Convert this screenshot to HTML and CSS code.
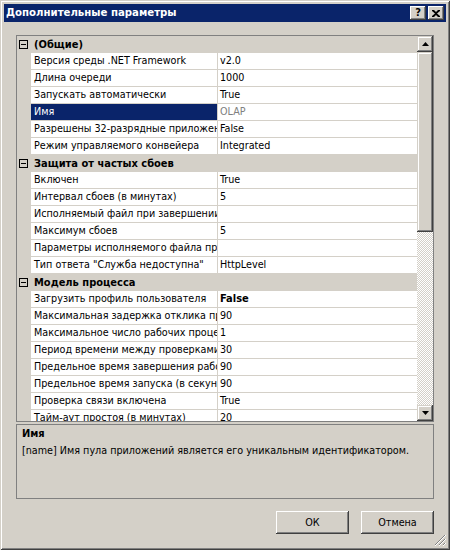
FILE: index.html
```html
<!DOCTYPE html>
<html lang="ru">
<head>
<meta charset="utf-8">
<title>Дополнительные параметры</title>
<link rel="stylesheet" href="styles.css">
</head>
<body>
<div class="window">
  <div class="titlebar">
    <span class="title">Дополнительные параметры</span>
    <div class="tbtns">
      <div class="tbtn help">?</div>
      <div class="tbtn close"><svg width="8" height="7" viewBox="0 0 8 7"><path d="M0 0h2l2 2 2-2h2v1L5 3.5 8 6v1H6L4 5 2 7H0V6l3-2.5L0 1z" fill="#000"/></svg></div>
    </div>
  </div>
  <div class="content">
    <div class="grid">
      <div class="rows">
        <div class="cat"><span class="box"></span><span class="ctext">(Общие)</span></div>
        <div class="row"><span class="mg"></span><span class="lbl">Версия среды .NET Framework</span><span class="val">v2.0</span></div>
        <div class="row"><span class="mg"></span><span class="lbl">Длина очереди</span><span class="val">1000</span></div>
        <div class="row"><span class="mg"></span><span class="lbl">Запускать автоматически</span><span class="val">True</span></div>
        <div class="row sel"><span class="mg"></span><span class="lbl">Имя</span><span class="val ro">OLAP</span></div>
        <div class="row"><span class="mg"></span><span class="lbl">Разрешены 32-разрядные приложения</span><span class="val">False</span></div>
        <div class="row"><span class="mg"></span><span class="lbl">Режим управляемого конвейера</span><span class="val">Integrated</span></div>
        <div class="cat"><span class="box"></span><span class="ctext">Защита от частых сбоев</span></div>
        <div class="row"><span class="mg"></span><span class="lbl">Включен</span><span class="val">True</span></div>
        <div class="row"><span class="mg"></span><span class="lbl">Интервал сбоев (в минутах)</span><span class="val">5</span></div>
        <div class="row"><span class="mg"></span><span class="lbl">Исполняемый файл при завершении работы</span><span class="val"></span></div>
        <div class="row"><span class="mg"></span><span class="lbl">Максимум сбоев</span><span class="val">5</span></div>
        <div class="row"><span class="mg"></span><span class="lbl">Параметры исполняемого файла при завершении</span><span class="val"></span></div>
        <div class="row"><span class="mg"></span><span class="lbl">Тип ответа "Служба недоступна"</span><span class="val">HttpLevel</span></div>
        <div class="cat"><span class="box"></span><span class="ctext">Модель процесса</span></div>
        <div class="row"><span class="mg"></span><span class="lbl">Загрузить профиль пользователя</span><span class="val bold">False</span></div>
        <div class="row"><span class="mg"></span><span class="lbl">Максимальная задержка отклика при проверке связи</span><span class="val">90</span></div>
        <div class="row"><span class="mg"></span><span class="lbl">Максимальное число рабочих процессов</span><span class="val">1</span></div>
        <div class="row"><span class="mg"></span><span class="lbl">Период времени между проверками связи</span><span class="val">30</span></div>
        <div class="row"><span class="mg"></span><span class="lbl">Предельное время завершения работы</span><span class="val">90</span></div>
        <div class="row"><span class="mg"></span><span class="lbl">Предельное время запуска (в секундах)</span><span class="val">90</span></div>
        <div class="row"><span class="mg"></span><span class="lbl">Проверка связи включена</span><span class="val">True</span></div>
        <div class="row"><span class="mg"></span><span class="lbl">Тайм-аут простоя (в минутах)</span><span class="val">20</span></div>
      </div>
      <div class="scrollbar">
        <div class="sbtn"><svg width="7" height="4" viewBox="0 0 7 4"><path d="M3.5 0L7 4H0z" fill="#000"/></svg></div>
        <div class="thumb"></div>
        <div class="track"></div>
        <div class="sbtn"><svg width="7" height="4" viewBox="0 0 7 4"><path d="M0 0h7L3.5 4z" fill="#000"/></svg></div>
      </div>
    </div>
    <div class="desc">
      <div class="dtitle">Имя</div>
      <div class="dtext">[name] Имя пула приложений является его уникальным идентификатором.</div>
    </div>
    <div class="buttons">
      <div class="btn">ОК</div>
      <div class="btn">Отмена</div>
    </div>
  </div>
  <svg class="grip" width="12" height="12" viewBox="0 0 12 12">
    <path d="M11 1L1 11M11 5L5 11M11 9L9 11" stroke="#808080" stroke-width="1"/>
    <path d="M12 1L1 12M12 5L5 12M12 9L9 12" stroke="#fff" stroke-width="1"/>
  </svg>
</div>
</body>
</html>
```
FILE: styles.css
```css
* { box-sizing: border-box; }
html, body { margin: 0; padding: 0; }
body {
  width: 450px;
  height: 550px;
  overflow: hidden;
  font-family: "DejaVu Sans Condensed", "DejaVu Sans", sans-serif;
  font-size: 10.7px;
  color: #000;
  background: #D4D0C8;
}
.window {
  position: relative;
  width: 450px;
  height: 550px;
  background: #D4D0C8;
  padding: 4px;
  box-shadow: inset 1px 1px 0 #D4D0C8, inset -1px -1px 0 #404040, inset 2px 2px 0 #fff, inset -2px -2px 0 #808080;
  display: flex;
  flex-direction: column;
}
.titlebar {
  height: 18px;
  background: #0A246A;
  color: #fff;
  display: flex;
  align-items: center;
  justify-content: space-between;
  padding: 0 2px 0 2px;
}
.title {
  font-weight: bold;
  font-size: 11.3px;
  line-height: 18px;
}
.tbtns { display: flex; gap: 2px; }
.tbtn {
  width: 16px;
  height: 14px;
  background: #D4D0C8;
  color: #000;
  box-shadow: inset -1px -1px 0 #404040, inset 1px 1px 0 #fff, inset -2px -2px 0 #808080;
  display: flex;
  align-items: center;
  justify-content: center;
  font-weight: bold;
  font-size: 11px;
  line-height: 14px;
}
.content {
  flex: 1;
  padding: 13px 12px 0 12px;
  display: flex;
  flex-direction: column;
}
.grid {
  height: 387px;
  border: 1px solid #808080;
  display: flex;
  background: #D4D0C8;
}
.rows {
  width: 400px;
  overflow: hidden;
  display: flex;
  flex-direction: column;
}
.cat {
  flex: none;
  height: 17px;
  display: flex;
  align-items: center;
  background: #D4D0C8;
  font-weight: bold;
  font-size: 11px;
}
.box {
  width: 9px;
  height: 9px;
  margin-left: 2px;
  border: 1px solid #000;
  position: relative;
  margin-top: -1px;
}
.box::after {
  content: "";
  position: absolute;
  left: 1px;
  top: 3px;
  width: 5px;
  height: 1px;
  background: #000;
}
.ctext { margin-left: 6px; line-height: 16px; }
.row {
  flex: none;
  height: 17px;
  display: flex;
}
.mg { width: 14px; flex: none; background: #D4D0C8; }
.lbl, .val {
  height: 17px;
  line-height: 16px;
  border-bottom: 1px solid #D4D0C8;
  white-space: nowrap;
  overflow: hidden;
  background: #fff;
  padding-left: 3px;
}
.lbl { width: 187px; flex: none; border-right: 1px solid #D4D0C8; }
.val { flex: 1; padding-left: 2px; }
.sel .lbl { background: #0A246A; color: #fff; }
.val.ro { color: #808080; }
.val.bold { font-weight: bold; font-size: 11px; }
.scrollbar {
  width: 16px;
  flex: none;
  display: flex;
  flex-direction: column;
}
.sbtn, .thumb {
  background: #D4D0C8;
  box-shadow: inset -1px -1px 0 #404040, inset 1px 1px 0 #D4D0C8, inset -2px -2px 0 #808080, inset 2px 2px 0 #fff;
}
.sbtn {
  height: 16px;
  flex: none;
  display: flex;
  align-items: center;
  justify-content: center;
}
.thumb { height: 180px; flex: none; }
.track {
  flex: 1;
  background: conic-gradient(#fff 25%, #D4D0C8 0 50%, #fff 0 75%, #D4D0C8 0);
  background-size: 2px 2px;
}
.desc {
  margin-top: 2px;
  height: 75px;
  border: 1px solid #808080;
  padding: 2px 5px;
}
.dtitle { font-weight: bold; font-size: 11px; line-height: 14px; margin-bottom: 3px; }
.dtext { line-height: 14px; }
.buttons {
  margin-top: 12px;
  display: flex;
  justify-content: flex-end;
  gap: 12px;
}
.btn {
  width: 73px;
  height: 23px;
  background: #D4D0C8;
  box-shadow: inset -1px -1px 0 #404040, inset 1px 1px 0 #fff, inset -2px -2px 0 #808080;
  display: flex;
  align-items: center;
  justify-content: center;
}
.grip {
  position: absolute;
  right: 4px;
  bottom: 4px;
}
```
